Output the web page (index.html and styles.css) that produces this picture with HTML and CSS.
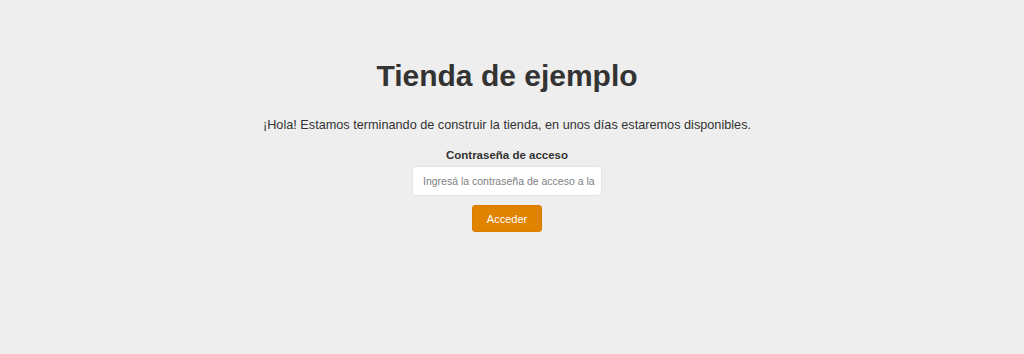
FILE: index.html
```html
<!DOCTYPE html>
<html lang="es">
<head>
    <meta charset="UTF-8">
    <meta name="viewport" content="width=device-width, initial-scale=1.0">
    <title>Tienda de ejemplo</title>
    <link rel="stylesheet" href="styles.css">
</head>
<body>
    <div class="container">
        <h1>Tienda de ejemplo</h1>
        <p class="intro">¡Hola! Estamos terminando de construir la tienda, en unos días estaremos disponibles.</p>
        <form class="access-form" onsubmit="return false;">
            <label for="password">Contraseña de acceso</label>
            <input type="password" id="password" placeholder="Ingresá la contraseña de acceso a la tienda">
            <button type="submit" class="btn">Acceder</button>
        </form>
    </div>
</body>
</html>
```

FILE: styles.css
```css
body {
    font-family: "Liberation Sans", Arial, sans-serif;
    margin: 0;
    padding-right: 10px;
    background: #eeeeee;
    color: #333333;
}

.container {
    max-width: 800px;
    margin: 0 auto;
    padding-top: 59px;
    text-align: center;
}

h1 {
    font-size: 30px;
    margin: 0 0 23px;
    line-height: 34px;
}

.intro {
    font-size: 12.7px;
    margin: 0 0 14px;
    line-height: 18px;
}

.access-form {
    display: flex;
    flex-direction: column;
    align-items: center;
}

.access-form label {
    font-size: 11.5px;
    font-weight: bold;
    line-height: 14px;
    margin-bottom: 4px;
}

.access-form input {
    width: 190px;
    height: 30px;
    box-sizing: border-box;
    padding: 0 6px 0 10px;
    border: 1px solid #e4e4e4;
    border-radius: 3px;
    background: white;
    font-family: inherit;
    font-size: 10.5px;
    color: #333;
    margin-bottom: 9px;
}

.access-form input::placeholder {
    color: #808080;
}

.btn {
    width: 70px;
    height: 27px;
    background: #e08300;
    color: white;
    border: 1px solid #d97f00;
    border-radius: 3px;
    font-family: inherit;
    font-size: 11px;
    padding: 0;
    cursor: pointer;
}
```
